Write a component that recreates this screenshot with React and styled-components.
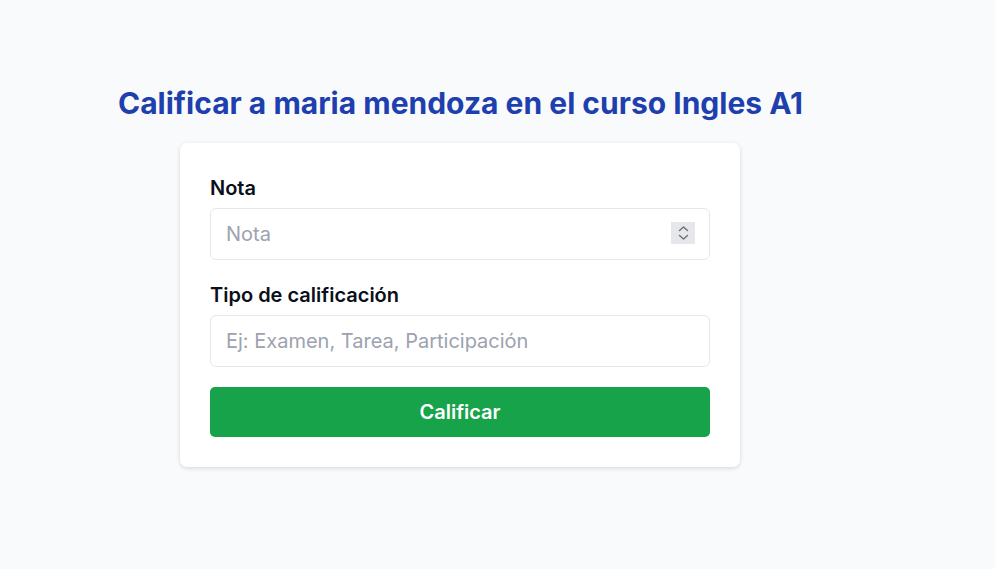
import styled, { createGlobalStyle } from "styled-components";

const GlobalStyle = createGlobalStyle`
  html, body {
    margin: 0;
    padding: 0;
    background: #f9fafb;
    font-family: Inter, "Noto Sans", sans-serif;
  }
`;

const Page = styled.main`
  min-height: 569px;
  padding: 85px 0 0 118px;
  box-sizing: border-box;
`;

const Title = styled.h1`
  margin: 0 0 22px;
  font-size: 30px;
  line-height: 36px;
  font-weight: 700;
  color: #1e40af;
`;

const Card = styled.form`
  margin-left: 62px;
  width: 560px;
  box-sizing: border-box;
  padding: 30px;
  background: #fff;
  border-radius: 7px;
  box-shadow: 0 1px 4px rgba(0, 0, 0, 0.1), 0 2px 6px -1px rgba(0, 0, 0, 0.06);
  display: flex;
  flex-direction: column;
`;

const Label = styled.label`
  font-size: 20px;
  line-height: 30px;
  font-weight: 600;
  color: #0b0f19;
  margin: ${(p) => (p.$first ? "0" : "20px")} 0 5px;
`;

const Field = styled.div`
  position: relative;
`;

const Input = styled.input`
  width: 100%;
  height: 52px;
  box-sizing: border-box;
  padding: 0 15px;
  border: 1px solid #e5e7eb;
  border-radius: 6px;
  font-family: inherit;
  font-size: 20px;
  color: #111;
  background: #fff;
  outline: none;

  &::placeholder {
    color: #9ca3af;
  }
`;

const Spinner = styled.span`
  position: absolute;
  right: 15px;
  top: 14px;
  width: 24px;
  height: 22px;
  background: #e5e7eb;
  display: flex;
  align-items: center;
  justify-content: center;
`;

const Button = styled.button`
  margin-top: 20px;
  height: 50px;
  border: none;
  border-radius: 5px;
  background: #16a34a;
  color: #fff;
  font-family: inherit;
  font-size: 20px;
  font-weight: 600;
  cursor: pointer;
`;

export default function App() {
  return (
    <>
      <GlobalStyle />
      <Page>
        <Title>Calificar a maria mendoza en el curso Ingles A1</Title>
        <Card onSubmit={(e) => e.preventDefault()}>
          <Label $first>Nota</Label>
          <Field>
            <Input type="text" placeholder="Nota" />
            <Spinner>
              <svg width="11" height="16" viewBox="0 0 11 16" fill="none" stroke="#71717a" strokeWidth="1.5" strokeLinecap="round" strokeLinejoin="round">
                <path d="M1.5 5.5 5.5 2 9.5 5.5" />
                <path d="M1.5 10.5 5.5 14 9.5 10.5" />
              </svg>
            </Spinner>
          </Field>
          <Label>Tipo de calificación</Label>
          <Input type="text" placeholder="Ej: Examen, Tarea, Participación" />
          <Button type="submit">Calificar</Button>
        </Card>
      </Page>
    </>
  );
}
